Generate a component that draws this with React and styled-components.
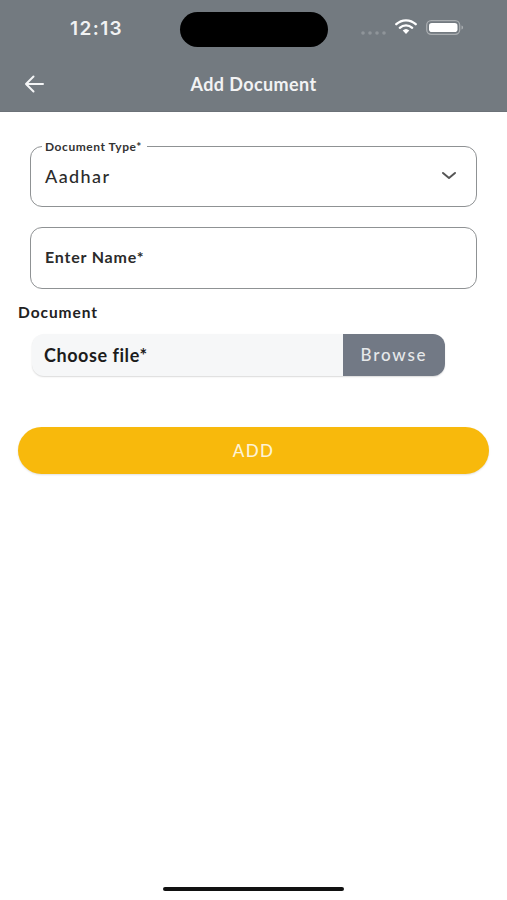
import React from "react";
import styled, { createGlobalStyle } from "styled-components";

const Global = createGlobalStyle`
  html, body { margin: 0; padding: 0; background: #fff; }
  body { font-family: Lato, "Liberation Sans", sans-serif; overflow: hidden; }
  * { box-sizing: border-box; }
`;

const Page = styled.div`
  width: 507px;
  height: 900px;
  display: flex;
  flex-direction: column;
  background: #fff;
  overflow: hidden;
`;

const Header = styled.header`
  height: 112px;
  flex: none;
  background: #737a80;
  border-bottom: 1px solid #6c7278;
  color: #fff;
`;

const StatusBar = styled.div`
  height: 59px;
  padding-top: 12px;
  display: grid;
  grid-template-columns: 180px 148px 1fr;
  align-items: start;
`;

const Time = styled.div`
  height: 33px;
  padding-left: 70px;
  display: flex;
  align-items: center;
  font-family: Inter, "Liberation Sans", sans-serif;
  font-size: 19px;
  font-weight: 600;
  letter-spacing: 1.4px;
  color: #f1f2f3;
`;

const Island = styled.div`
  width: 148px;
  height: 35px;
  border-radius: 18px;
  background: #000;
`;

const StatusIcons = styled.div`
  height: 35px;
  padding: 0 0 6px 32px;
  display: flex;
  align-items: center;
`;

const NavBar = styled.div`
  height: 52px;
  padding: 0 24px 0 24px;
  display: grid;
  grid-template-columns: 20px 1fr 20px;
  align-items: center;
`;

const NavTitle = styled.h1`
  margin: 0 0 3px;
  text-align: center;
  font-size: 18px;
  font-weight: 700;
  letter-spacing: 0.4px;
  color: #f2f3f4;
`;

const Form = styled.main`
  padding: 28px 18px 0;
  display: flex;
  flex-direction: column;
`;

const Outlined = styled.fieldset`
  margin: ${(p) => p.$mt || 0}px 12px 0;
  padding: 0 14px;
  height: ${(p) => (p.$legend ? 67 : 62)}px;
  border: 1.5px solid #8f9294;
  border-radius: 12px;
  min-width: 0;
`;

const FieldRow = styled.div`
  height: ${(p) => (p.$legend ? 52 : 59)}px;
  padding-bottom: ${(p) => (p.$legend ? 6 : 3)}px;
  display: flex;
  align-items: center;
  justify-content: space-between;
`;

const Legend = styled.legend`
  margin-left: -3px;
  padding: 0 5px 0 3px;
  font-size: 12px;
  line-height: 13px;
  font-weight: 700;
  letter-spacing: 0.55px;
  color: #333;
`;

const Value = styled.span`
  font-size: 18px;
  font-weight: 500;
  letter-spacing: 1.4px;
  color: #2b2b2b;
`;

const Placeholder = styled.span`
  font-size: 16px;
  font-weight: 700;
  letter-spacing: 0.8px;
  color: #2b2b2b;
`;

const SectionLabel = styled.div`
  margin-top: 14px;
  font-size: 15.5px;
  line-height: 18px;
  font-weight: 700;
  letter-spacing: 0.95px;
  color: #222;
`;

const FileField = styled.div`
  margin: 13px 0 0 14px;
  width: 413px;
  height: 42px;
  display: flex;
  border-radius: 12px;
  overflow: hidden;
  background: #f6f7f8;
  box-shadow: 0 1px 1.5px rgba(0, 0, 0, 0.15);
`;

const FileText = styled.div`
  flex: 1;
  padding: 0 0 1px 12px;
  display: flex;
  align-items: center;
  font-size: 18px;
  font-weight: 700;
  letter-spacing: 0.55px;
  color: #1c1c1c;
`;

const Browse = styled.div`
  width: 102px;
  padding-bottom: 2px;
  display: flex;
  align-items: center;
  justify-content: center;
  background: #727985;
  color: #e6e8ea;
  font-size: 17px;
  font-weight: 500;
  letter-spacing: 1.8px;
`;

const AddButton = styled.button`
  margin-top: 51px;
  padding-bottom: 2px;
  height: 47px;
  width: 471px;
  border: 0;
  border-radius: 24px;
  background: #f8b90c;
  color: #fdf3d6;
  font-family: inherit;
  font-size: 17px;
  font-weight: 500;
  letter-spacing: 1.3px;
  box-shadow: 0 1px 2px rgba(0, 0, 0, 0.12);
`;

const HomeBar = styled.div`
  margin: auto auto 9px;
  width: 181px;
  height: 4px;
  border-radius: 2px;
  background: #111;
`;

const Chevron = () => (
  <svg width="16" height="10" viewBox="0 0 16 10" fill="none" style={{ marginRight: 5 }}>
    <path d="M2 2l6 5 6-5" stroke="#555" strokeWidth="2" strokeLinecap="round" strokeLinejoin="round" />
  </svg>
);

const Back = () => (
  <svg width="20" height="18" viewBox="0 0 20 18" fill="none" style={{ marginBottom: 3 }}>
    <path d="M19 9H2M9.500 1.500L2 9l7.500 7.500" stroke="#f4f5f6" strokeWidth="2" strokeLinecap="round" strokeLinejoin="round" />
  </svg>
);

const Dots = () => (
  <svg width="27" height="6" viewBox="0 0 27 6" style={{ marginTop: 13 }}>
    <g fill="#8f9599">
      <circle cx="3" cy="3" r="1.800" />
      <circle cx="10" cy="3" r="1.800" />
      <circle cx="17" cy="3" r="1.800" />
      <circle cx="24" cy="3" r="1.800" />
    </g>
  </svg>
);

const Wifi = () => (
  <svg width="22" height="18" viewBox="0 0 22 18" fill="none" style={{ marginLeft: 8 }}>
    <path d="M1.300 6.200a14 14 0 0 1 19.400 0" stroke="#fff" strokeWidth="2.300" strokeLinecap="round" />
    <path d="M4.800 9.800a9 9 0 0 1 12.400 0" stroke="#fff" strokeWidth="2.300" strokeLinecap="round" />
    <path d="M11 16l-3.300-3.400a4.800 4.800 0 0 1 6.600 0z" fill="#fff" />
  </svg>
);

const Battery = () => (
  <svg width="38" height="16" viewBox="0 0 38 16" fill="none" style={{ marginLeft: 9, marginTop: 3 }}>
    <rect x="0.700" y="0.700" width="33" height="13.600" rx="4.500" stroke="#a9adb0" strokeWidth="1.300" />
    <rect x="3" y="3" width="28.500" height="9" rx="2.800" fill="#fff" />
    <path d="M35.500 5.500v4c1-.3 1.600-1 1.600-2s-.6-1.700-1.600-2z" fill="#a9adb0" />
  </svg>
);

export default function App() {
  return (
    <Page>
      <Global />
      <Header>
        <StatusBar>
          <Time>12:13</Time>
          <Island />
          <StatusIcons>
            <Dots />
            <Wifi />
            <Battery />
          </StatusIcons>
        </StatusBar>
        <NavBar>
          <Back />
          <NavTitle>Add Document</NavTitle>
        </NavBar>
      </Header>
      <Form>
        <Outlined $legend>
          <Legend>Document Type*</Legend>
          <FieldRow $legend>
            <Value>Aadhar</Value>
            <Chevron />
          </FieldRow>
        </Outlined>
        <Outlined $mt={20}>
          <FieldRow>
            <Placeholder>Enter Name*</Placeholder>
          </FieldRow>
        </Outlined>
        <SectionLabel>Document</SectionLabel>
        <FileField>
          <FileText>Choose file*</FileText>
          <Browse>Browse</Browse>
        </FileField>
        <AddButton>ADD</AddButton>
      </Form>
      <HomeBar />
    </Page>
  );
}
